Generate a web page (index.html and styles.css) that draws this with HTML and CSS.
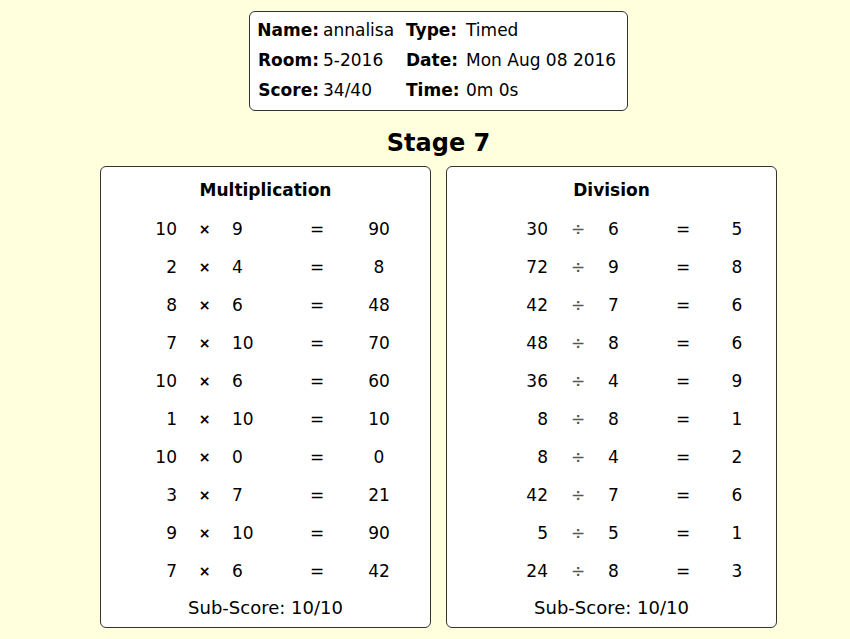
FILE: index.html
```html
<!DOCTYPE html>
<html>
<head>
<meta charset="utf-8">
<link rel="stylesheet" href="styles.css">
</head>
<body>
<div class="page">
  <div class="info">
    <div class="info-grid">
      <span class="lbl r">Name:</span><span class="val">annalisa</span><span class="lbl">Type:</span><span class="val">Timed</span>
      <span class="lbl r">Room:</span><span class="val">5-2016</span><span class="lbl">Date:</span><span class="val">Mon Aug 08 2016</span>
      <span class="lbl r">Score:</span><span class="val">34/40</span><span class="lbl">Time:</span><span class="val">0m 0s</span>
    </div>
  </div>
  <h1 class="stage">Stage 7</h1>
  <div class="panels">
    <section class="panel mul">
      <h2 class="panel-title">Multiplication</h2>
      <div class="rows">
        <div class="row"><span class="a">10</span><span class="op">×</span><span class="b">9</span><span class="eq">=</span><span class="res">90</span></div>
        <div class="row"><span class="a">2</span><span class="op">×</span><span class="b">4</span><span class="eq">=</span><span class="res">8</span></div>
        <div class="row"><span class="a">8</span><span class="op">×</span><span class="b">6</span><span class="eq">=</span><span class="res">48</span></div>
        <div class="row"><span class="a">7</span><span class="op">×</span><span class="b">10</span><span class="eq">=</span><span class="res">70</span></div>
        <div class="row"><span class="a">10</span><span class="op">×</span><span class="b">6</span><span class="eq">=</span><span class="res">60</span></div>
        <div class="row"><span class="a">1</span><span class="op">×</span><span class="b">10</span><span class="eq">=</span><span class="res">10</span></div>
        <div class="row"><span class="a">10</span><span class="op">×</span><span class="b">0</span><span class="eq">=</span><span class="res">0</span></div>
        <div class="row"><span class="a">3</span><span class="op">×</span><span class="b">7</span><span class="eq">=</span><span class="res">21</span></div>
        <div class="row"><span class="a">9</span><span class="op">×</span><span class="b">10</span><span class="eq">=</span><span class="res">90</span></div>
        <div class="row"><span class="a">7</span><span class="op">×</span><span class="b">6</span><span class="eq">=</span><span class="res">42</span></div>
      </div>
      <div class="sub">Sub-Score: 10/10</div>
    </section>
    <section class="panel div">
      <h2 class="panel-title">Division</h2>
      <div class="rows">
        <div class="row"><span class="a">30</span><span class="op">÷</span><span class="b">6</span><span class="eq">=</span><span class="res">5</span></div>
        <div class="row"><span class="a">72</span><span class="op">÷</span><span class="b">9</span><span class="eq">=</span><span class="res">8</span></div>
        <div class="row"><span class="a">42</span><span class="op">÷</span><span class="b">7</span><span class="eq">=</span><span class="res">6</span></div>
        <div class="row"><span class="a">48</span><span class="op">÷</span><span class="b">8</span><span class="eq">=</span><span class="res">6</span></div>
        <div class="row"><span class="a">36</span><span class="op">÷</span><span class="b">4</span><span class="eq">=</span><span class="res">9</span></div>
        <div class="row"><span class="a">8</span><span class="op">÷</span><span class="b">8</span><span class="eq">=</span><span class="res">1</span></div>
        <div class="row"><span class="a">8</span><span class="op">÷</span><span class="b">4</span><span class="eq">=</span><span class="res">2</span></div>
        <div class="row"><span class="a">42</span><span class="op">÷</span><span class="b">7</span><span class="eq">=</span><span class="res">6</span></div>
        <div class="row"><span class="a">5</span><span class="op">÷</span><span class="b">5</span><span class="eq">=</span><span class="res">1</span></div>
        <div class="row"><span class="a">24</span><span class="op">÷</span><span class="b">8</span><span class="eq">=</span><span class="res">3</span></div>
      </div>
      <div class="sub">Sub-Score: 10/10</div>
    </section>
  </div>
</div>
</body>
</html>
```
FILE: styles.css
```css
html, body {
  margin: 0;
  padding: 0;
  background: #ffffdd;
}
body {
  font-family: "DejaVu Sans", "Open Sans", sans-serif;
  color: #000;
  font-size: 17px;
}
.page {
  width: 677px;
  margin: 0 auto;
  padding: 11px 0 0 27px;
  display: flex;
  flex-direction: column;
  align-items: center;
}
.info {
  width: 377px;
  border: 1px solid #333;
  border-radius: 6px;
  background: #fff;
  padding: 3px 0 5px 0;
}
.info-grid {
  display: grid;
  grid-template-columns: 69px 87px 56px 1fr;
}
.info-grid span {
  height: 30px;
  line-height: 30px;
  white-space: nowrap;
}
.info-grid .val {
  padding-left: 4px;
}
.info-grid .lbl {
  font-weight: bold;
}
.info-grid .r {
  text-align: right;
}
.stage {
  margin: 15px 0 6px;
  font-size: 24px;
  line-height: 34px;
  font-weight: bold;
}
.panels {
  display: flex;
  gap: 15px;
}
.panel {
  width: 329px;
  border: 1px solid #333;
  border-radius: 6px;
  background: #fff;
  padding: 8px 0 4px;
}
.panel-title {
  margin: 0 0 5px;
  font-size: 17px;
  line-height: 30px;
  text-align: center;
  font-weight: bold;
}
.row {
  display: grid;
  height: 38px;
  line-height: 38px;
}
.mul .row {
  grid-template-columns: 76px 55px 60px 50px 74px;
}
.div .row {
  grid-template-columns: 101px 60px 50px 50px 58px;
}
.row .a { text-align: right; }
.row .op { text-align: center; }
.row .b { text-align: left; }
.row .eq { text-align: center; }
.row .res { text-align: center; }
.mul .op { font-size: 14px; font-weight: bold; }
.div .op { color: #555; }
.sub {
  margin-top: 3px;
  height: 30px;
  line-height: 30px;
  text-align: center;
  font-size: 18px;
}
```
